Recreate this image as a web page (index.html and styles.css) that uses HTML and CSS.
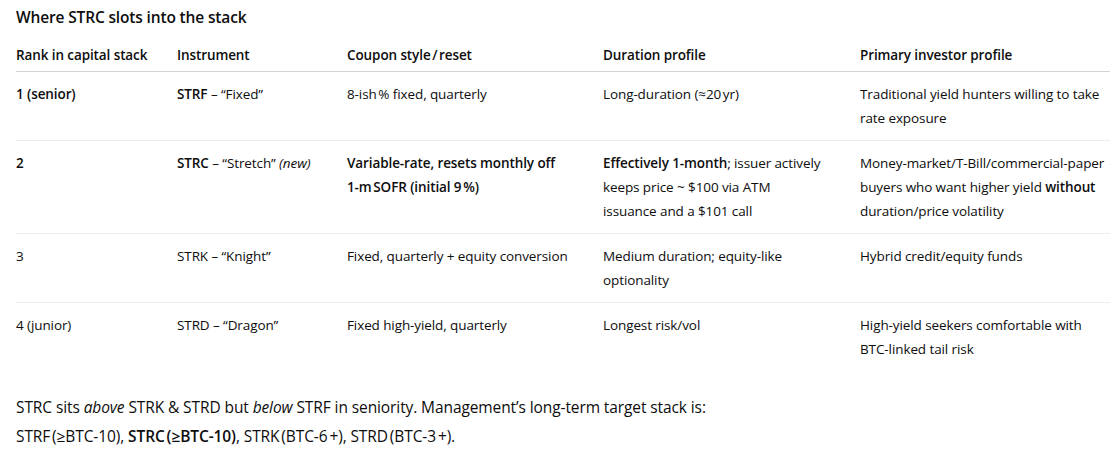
FILE: index.html
```html
<!DOCTYPE html>
<html lang="en">
<head>
<meta charset="utf-8">
<title>Where STRC slots into the stack</title>
<link rel="stylesheet" href="styles.css">
</head>
<body>
<main class="doc">
  <h3 class="title">Where STRC slots into the stack</h3>
  <table class="stack">
    <colgroup>
      <col class="c1"><col class="c2"><col class="c3"><col class="c4"><col class="c5">
    </colgroup>
    <thead>
      <tr>
        <th>Rank in capital stack</th>
        <th>Instrument</th>
        <th>Coupon style&#8239;/&#8239;reset</th>
        <th>Duration profile</th>
        <th>Primary investor profile</th>
      </tr>
    </thead>
    <tbody>
      <tr>
        <td><strong>1 (senior)</strong></td>
        <td><strong>STRF</strong> – “Fixed”</td>
        <td>8-ish&#8239;% fixed, quarterly</td>
        <td>Long-duration (≈20&#8239;yr)</td>
        <td>Traditional yield hunters willing to take rate exposure</td>
      </tr>
      <tr>
        <td><strong>2</strong></td>
        <td><strong>STRC</strong> – “Stretch” <em>(new)</em></td>
        <td><strong>Variable-rate, resets monthly off <span class="nb">1-m&#8239;SOFR</span> (initial 9&#8239;%)</strong></td>
        <td><strong>Effectively 1-month</strong>; issuer actively keeps price ~ $100 via ATM issuance and a $101 call</td>
        <td><span class="nb">Money-market/T-Bill/commercial-paper</span> buyers who want higher yield <strong>without</strong> duration/price volatility</td>
      </tr>
      <tr>
        <td>3</td>
        <td>STRK – “Knight”</td>
        <td>Fixed, quarterly + equity conversion</td>
        <td>Medium duration; equity-like optionality</td>
        <td>Hybrid credit/equity funds</td>
      </tr>
      <tr>
        <td>4 (junior)</td>
        <td>STRD – “Dragon”</td>
        <td>Fixed high-yield, quarterly</td>
        <td>Longest risk/vol</td>
        <td>High-yield seekers comfortable with BTC-linked tail risk</td>
      </tr>
    </tbody>
  </table>
  <p class="note">STRC sits <em>above</em> STRK &amp; STRD but <em>below</em> STRF in seniority. Management’s long-term target stack is:<br>STRF&#8239;(≥BTC-10), <strong>STRC&#8239;(≥BTC-10)</strong>, STRK&#8239;(BTC-6&#8239;+), STRD&#8239;(BTC-3&#8239;+).</p>
</main>
</body>
</html>
```

FILE: styles.css
```css
html, body {
  margin: 0;
  padding: 0;
  background: #ffffff;
}

body {
  font-family: "Open Sans", "Noto Sans", sans-serif;
  color: #0d0d0d;
}

.doc {
  padding: 0 6px 0 16px;
}

.title {
  margin: 0;
  padding-top: 5px;
  font-size: 15.5px;
  letter-spacing: -0.15px;
  line-height: 24px;
  font-weight: 600;
}

.stack {
  width: 1094px;
  table-layout: fixed;
  border-collapse: collapse;
  margin-top: 14px;
  font-size: 13.5px;
  letter-spacing: -0.1px;
  line-height: 24px;
}

.c1 { width: 161px; }
.c2 { width: 170px; }
.c3 { width: 256px; }
.c4 { width: 257px; }
.c5 { width: 250px; }

.stack th {
  text-align: left;
  font-weight: 600;
  padding: 0 16px 4px 0;
  border-bottom: 1px solid #d4d4d4;
  vertical-align: bottom;
}

.stack td {
  padding: 10px 16px 10px 0;
  vertical-align: top;
  border-bottom: 1px solid #ececec;
}

.stack td:nth-child(4) {
  padding-right: 38px;
}

.stack th:last-child,
.stack td:last-child {
  padding-right: 0;
}

.stack tbody tr:last-child td {
  border-bottom: none;
}

.stack strong {
  font-weight: 600;
}

.nb {
  white-space: nowrap;
}

.note {
  margin: 22px 0 0;
  font-size: 15.5px;
  letter-spacing: -0.1px;
  line-height: 29px;
}

.note strong {
  font-weight: 600;
}
```
